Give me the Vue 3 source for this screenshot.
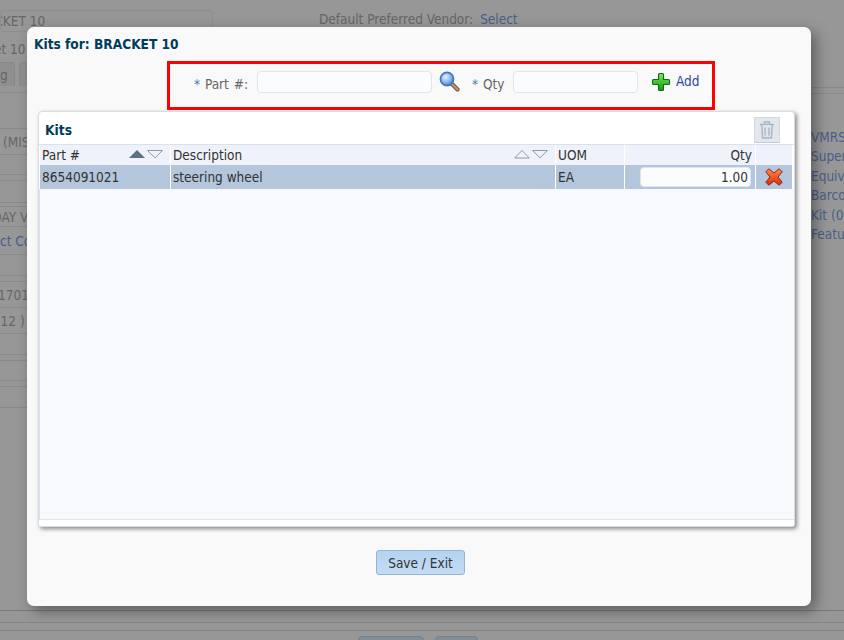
<script setup>
const leftLower = [
  { h: 7, text: '', cls: '', off: 0 },
  { h: 36, text: '', cls: '', off: 0 },
  { h: 26, text: '(MISC)', cls: 'dim', off: 3 },
  { h: 20, text: '', cls: '', off: 0 },
  { h: 6, text: '', cls: '', off: 0 },
  { h: 22, text: '', cls: '', off: 0 },
  { h: 4, text: '', cls: '', off: 0 },
  { h: 20, text: 'SAME DAY VENDOR', cls: 'dim', off: -46 },
  { h: 28, text: 'Select Cost', cls: 'blue', off: -26 },
  { h: 21, text: '', cls: '', off: 0 },
  { h: 6, text: '', cls: '', off: 0 },
  { h: 26, text: '1701', cls: 'dim', off: -2 },
  { h: 26, text: '( 12 )', cls: 'dim', off: -8 },
  { h: 21, text: '', cls: '', off: 0 },
  { h: 6, text: '', cls: '', off: 0 },
  { h: 20, text: '', cls: '', off: 0 },
  { h: 6, text: '', cls: '', off: 0 },
  { h: 21, text: '', cls: '', off: 0 },
]
const rightLinks = ['VMRS', 'Supersedes', 'Equivalents', 'Barcodes', 'Kit (0)', 'Features']
</script>

<template>
  <div class="page">
    <div class="bg">
      <div class="bg-top">
        <div class="bg-left">
          <div class="field"><span class="clip first">BRACKET 10</span></div>
          <div class="second"><span class="clip sec">Bracket 10</span></div>
          <div class="tabs"><span class="tab first-tab">g</span><span class="tab"></span></div>
          <div
            v-for="(r, i) in leftLower"
            :key="i"
            class="lrow"
            :style="{ height: r.h + 'px' }"
          >
            <span :class="r.cls" :style="{ marginLeft: r.off + 'px' }">{{ r.text }}</span>
          </div>
        </div>
        <div class="bg-center">
          <span class="dim">Default Preferred Vendor:</span>
          <span class="blue sel">Select</span>
        </div>
        <div class="bg-right">
          <div class="rline r1"></div>
          <div class="rline r2"></div>
          <a v-for="l in rightLinks" :key="l" class="blue">{{ l }}</a>
        </div>
      </div>
      <div class="bg-bottom">
        <div class="bline b1"></div>
        <div class="bline b2"></div>
        <div class="bline b3"></div>
        <div class="bbtns"><span class="bbtn w1"></span><span class="bbtn w2"></span></div>
      </div>
    </div>

    <div class="modal">
      <h2 class="title">Kits for: BRACKET 10</h2>

      <div class="redbox">
        <label class="lab lab1"><i>*</i> Part #:</label>
        <input class="inp part" />
        <svg class="search" width="22" height="22" viewBox="0 0 22 22">
          <defs>
            <radialGradient id="lens" cx="0.4" cy="0.35" r="0.7">
              <stop offset="0" stop-color="#e6f1fc" />
              <stop offset="0.55" stop-color="#8db8ea" />
              <stop offset="1" stop-color="#3d78c8" />
            </radialGradient>
          </defs>
          <path d="M12.5 12.5L18.5 18.5" stroke="#7c5a4c" stroke-width="4.4" stroke-linecap="round" />
          <path d="M12.5 12.5L18.5 18.5" stroke="#c9906f" stroke-width="2" stroke-linecap="round" />
          <circle cx="8" cy="8" r="6.6" fill="url(#lens)" stroke="#3f78c2" stroke-width="1.6" />
        </svg>
        <label class="lab lab2"><i>*</i> Qty</label>
        <input class="inp qty" />
        <svg class="plus" width="20" height="20" viewBox="0 0 20 20">
          <defs>
            <linearGradient id="gr" x1="0" y1="0" x2="0" y2="1">
              <stop offset="0" stop-color="#7fe85a" />
              <stop offset="1" stop-color="#0f9a0f" />
            </linearGradient>
          </defs>
          <path d="M7.5 2.5a1 1 0 0 1 1-1h3a1 1 0 0 1 1 1v5h5a1 1 0 0 1 1 1v3a1 1 0 0 1-1 1h-5v5a1 1 0 0 1-1 1h-3a1 1 0 0 1-1-1v-5h-5a1 1 0 0 1-1-1v-3a1 1 0 0 1 1-1h5z" fill="url(#gr)" stroke="#0c6d12" stroke-width="1.1" />
        </svg>
        <a class="add">Add</a>
      </div>

      <section class="panel">
        <header class="phead">
          <span class="ptitle">Kits</span>
          <button class="trash">
            <svg width="16" height="20" viewBox="0 0 16 20" fill="none" stroke="#aab6c2" stroke-width="1.4">
              <path d="M1 4.5h14" stroke-width="1.6" />
              <path d="M5.5 4V2h5v2" />
              <path d="M2.8 5l.8 13h8.8l.8-13" fill="#dfe5ec" />
              <path d="M6 7.5v8M10 7.5v8" />
            </svg>
          </button>
        </header>

        <div class="grid head">
          <div class="c c1">Part #
            <span class="sort">
              <svg width="34" height="10" viewBox="0 0 34 10">
                <path d="M0 9L8 1l8 8z" fill="#5c7086" />
                <path d="M18.5 1.5h15L26 8.8z" fill="none" stroke="#8c9aa7" />
              </svg>
            </span>
          </div>
          <div class="c c2">Description
            <span class="sort">
              <svg width="34" height="10" viewBox="0 0 34 10">
                <path d="M.7 9L8 1.5 15.3 9z" fill="none" stroke="#8c9aa7" />
                <path d="M18.5 1.5h15L26 8.8z" fill="none" stroke="#8c9aa7" />
              </svg>
            </span>
          </div>
          <div class="c c3">UOM</div>
          <div class="c c4 right">Qty</div>
          <div class="c c5"></div>
        </div>

        <div class="grid row">
          <div class="c c1">8654091021</div>
          <div class="c c2">steering wheel</div>
          <div class="c c3">EA</div>
          <div class="c c4 qcell"><input class="rowqty" value="1.00" /></div>
          <div class="c c5 xcell">
            <svg width="18" height="18" viewBox="0 0 18 18">
              <defs>
                <linearGradient id="rd" x1="0" y1="0" x2="0" y2="1">
                  <stop offset="0" stop-color="#ff8a4a" />
                  <stop offset="1" stop-color="#e0280c" />
                </linearGradient>
              </defs>
              <path d="M3.8 .8L9 5 14.2 .8 17.2 3.8 13 9 17.2 14.2 14.2 17.2 9 13 3.8 17.2 .8 14.2 5 9 .8 3.8z" fill="url(#rd)" stroke="#8a2a14" stroke-width="1" stroke-linejoin="round" />
            </svg>
          </div>
        </div>

        <div class="body"></div>
        <div class="foot"></div>
      </section>

      <div class="actions">
        <button class="save">Save / Exit</button>
      </div>
    </div>
  </div>
</template>

<style>
html, body { margin: 0; padding: 0; }
</style>

<style scoped>
.page {
  position: relative;
  width: 844px;
  height: 640px;
  overflow: hidden;
  background: #979797;
  font-family: "DejaVu Sans", sans-serif;
  font-stretch: condensed;
  font-size: 13.5px;
  color: #333;
}
.bg { height: 640px; display: flex; flex-direction: column; }
.bg-top { display: flex; height: 606px; flex: none; position: relative; overflow: hidden; }
.dim { color: #666; white-space: nowrap; }
.blue { color: #4a5f88; white-space: nowrap; }
.bg-left { width: 213px; flex: none; }
.field {
  height: 20px;
  margin-top: 10px;
  border: 1px solid #8e8e8e;
  border-radius: 4px;
  overflow: hidden;
  line-height: 20px;
  white-space: nowrap;
}
.clip { color: #666; white-space: nowrap; display: inline-block; }
.first { margin-left: -31px; }
.second { height: 30px; line-height: 34px; white-space: nowrap; overflow: hidden; }
.sec { margin-left: -40px; }
.tabs { display: flex; gap: 4px; height: 24px; }
.tab {
  width: 38px;
  height: 24px;
  background: #8f8f8f;
  border: 1px solid #888;
  border-bottom: 0;
  border-radius: 4px 4px 0 0;
  box-sizing: border-box;
  color: #666;
  line-height: 24px;
  text-align: right;
  padding-right: 6px;
}
.first-tab { width: 15px; padding-right: 7px; border-left: 0; border-radius: 0 4px 0 0; }
.lrow {
  display: flex;
  align-items: center;
  border-bottom: 1px solid #8a8a8a;
  box-sizing: border-box;
  overflow: hidden;
  white-space: nowrap;
  padding-top: 1px;
}
.bg-center { padding: 10px 0 0 106px; white-space: nowrap; width: 300px; flex: none; line-height: 18px; }
.sel { margin-left: 7px; }
.bg-right {
  position: absolute;
  left: 780px;
  top: 87px;
  display: flex;
  flex-direction: column;
  width: 64px;
  overflow: hidden;
  line-height: 19.4px;
}
.bg-right a { margin-left: 31px; width: 33px; overflow: hidden; }
.rline { height: 1px; background: #8a8a8a; flex: none; }
.r2 { margin: 5px 0 34px; }
.bg-bottom { flex: none; height: 34px; position: relative; }
.bline { height: 1px; background: #858585; }
.b1 { margin-top: 4px; background: #7a7a7a; }
.b2 { margin-top: 11px; }
.b3 { margin-top: 7px; }
.bbtns { display: flex; gap: 11px; padding: 5px 0 0 358px; }
.bbtn { height: 20px; flex: none; background: #828d96; border: 1px solid #75818b; border-radius: 4px; box-sizing: border-box; }
.w1 { width: 66px; }
.w2 { width: 43px; }

.modal {
  position: absolute;
  left: 27px;
  top: 27px;
  width: 784px;
  height: 579px;
  box-sizing: border-box;
  background: #f9f9f9;
  border-radius: 7px;
  box-shadow: 5px 5px 14px rgba(0, 0, 0, .38);
  display: flex;
  flex-direction: column;
}
.title {
  margin: 0;
  padding: 9px 0 0 7px;
  height: 25px;
  box-sizing: border-box;
  font-size: 13.6px;
  font-weight: bold;
  line-height: 17px;
  color: #003d5b;
}
.redbox {
  margin: 9px 0 0 140px;
  width: 548px;
  height: 49px;
  box-sizing: border-box;
  border: 3px solid #f00;
  padding-bottom: 6px;
  display: flex;
  align-items: center;
  color: #666;
}
.lab { white-space: nowrap; margin-top: 2px; word-spacing: 1px; }
.lab i { font-style: normal; color: #4a7fa8; }
.lab1 { margin-left: 24px; width: 63px; }
.lab2 { margin-left: 11px; width: 41px; }
.inp {
  height: 22px;
  box-sizing: border-box;
  border: 1px solid #dfe5ec;
  border-radius: 4px;
  background: #fbfcfe;
  padding: 0;
  margin-top: -1px;
}
.part { width: 175px; }
.qty { width: 125px; }
.search { margin: -2px 0 0 7px; flex: none; }
.plus { margin-left: 13px; flex: none; margin-top: -2px; }
.add { color: #1f4a9c; margin-left: 5px; margin-top: -3px; }

.panel {
  margin: 1px 0 0 11px;
  width: 757px;
  height: 416px;
  box-sizing: border-box;
  border: 1px solid #d5dee7;
  border-radius: 4px 4px 3px 3px;
  background: #fff;
  box-shadow: 2px 2px 4px rgba(0, 0, 0, .45);
  display: flex;
  flex-direction: column;
}
.phead {
  height: 33px;
  flex: none;
  box-sizing: border-box;
  border-bottom: 1px solid #d9e1ea;
  display: flex;
  align-items: center;
  justify-content: space-between;
  padding: 0 14px 0 6px;
}
.ptitle { font-size: 13.7px; font-weight: bold; color: #003d5b; margin-top: 3px; }
.trash {
  width: 26px;
  height: 26px;
  margin-top: 3px;
  box-sizing: border-box;
  padding: 0;
  border: 1px solid #d4dae1;
  border-bottom-color: #c3cad2;
  background: #e2e7ef;
  display: flex;
  align-items: center;
  justify-content: center;
}
.grid {
  display: grid;
  grid-template-columns: 130px 384px 68px 130px 36px;
  column-gap: 1px;
  flex: none;
  width: 752px;
  margin-left: 1px;
}
.head { height: 19px; background: #fff; border-bottom: 1px solid #d9e1ea; }
.head .c { background: #eff2fa; }
.row { height: 24px; background: #fff; }
.row .c { background: #b3c6dc; line-height: 24px; }
.c {
  padding-left: 2px;
  line-height: 20px;
  white-space: nowrap;
  position: relative;
  min-width: 0;
  color: #333;
}
.right { text-align: right; padding-right: 3px; }
.sort { position: absolute; right: 7px; top: 4px; display: flex; }
.qcell { padding: 2px 4px 2px 15px; box-sizing: border-box; display: flex; }
.rowqty {
  width: 100%;
  height: 20px;
  box-sizing: border-box;
  border: 1px solid #dfe5ec;
  border-radius: 4px;
  background: #fbfcfe;
  text-align: right;
  font: inherit;
  color: #333;
  padding: 0 2px 0 0;
}
.xcell { display: flex; align-items: center; justify-content: center; padding: 0; }
.body {
  flex: 1;
  background: #f7f9fd;
  border-left: 1px solid #d9e3ec;
  border-bottom: 1px solid #dfe3ea;
}
.foot { height: 6px; flex: none; background: #fff; }
.actions { display: flex; justify-content: center; margin-top: 23px; padding-left: 3px; }
.save {
  width: 89px;
  height: 25px;
  box-sizing: border-box;
  padding: 0;
  border: 1px solid #92b5d3;
  border-radius: 3px;
  background: linear-gradient(#b3d3f1, #c4dcf4);
  font: inherit;
  color: #333;
}
</style>
